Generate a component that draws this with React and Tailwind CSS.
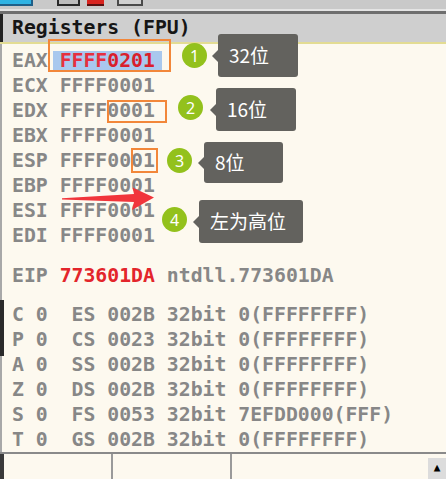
const regs = [
  ['EAX', 'FFFF0201'],
  ['ECX', 'FFFF0001'],
  ['EDX', 'FFFF0001'],
  ['EBX', 'FFFF0001'],
  ['ESP', 'FFFF0001'],
  ['EBP', 'FFFF0001'],
  ['ESI', 'FFFF0001'],
  ['EDI', 'FFFF0001'],
]

const flags = [
  ['C', 'ES', '002B', '0(FFFFFFFF)'],
  ['P', 'CS', '0023', '0(FFFFFFFF)'],
  ['A', 'SS', '002B', '0(FFFFFFFF)'],
  ['Z', 'DS', '002B', '0(FFFFFFFF)'],
  ['S', 'FS', '0053', '7EFDD000(FFF)'],
  ['T', 'GS', '002B', '0(FFFFFFFF)'],
]

const notes = [
  { n: '1', text: '32位', circle: 'left-[182px] top-[43px]', box: 'left-[218px] top-[34px] w-[80px] h-[43px]' },
  { n: '2', text: '16位', circle: 'left-[178px] top-[95px]', box: 'left-[216px] top-[88px] w-[80px] h-[43px]' },
  { n: '3', text: '8位', circle: 'left-[167px] top-[148px]', box: 'left-[204px] top-[142px] w-[79px] h-[41px]' },
  { n: '4', text: '左为高位', circle: 'left-[162px] top-[207px]', box: 'left-[199px] top-[200px] w-[104px] h-[43px]' },
]

function Row({ children, className = '' }) {
  return <div className={`h-[25px] flex items-center whitespace-pre ${className}`}>{children}</div>
}

export default function App() {
  return (
    <div className="relative w-[446px] h-[479px] overflow-hidden bg-[#fdf9ef] font-['DejaVu_Sans_Mono',monospace] text-[19.8px] font-bold text-[#878787]">
      {/* toolbar remnant */}
      <div className="h-[9px] bg-[#c9c9c9] relative">
        <div className="absolute left-0 top-0 w-[33px] h-[6px] bg-[#2fb3e3] border-b-2 border-r-2 border-[#1f5f88]" />
        <div className="absolute left-[57px] top-0 w-[23px] h-[6px] bg-[#bdbdbd] border-2 border-t-0 border-[#2a2a2a]" />
        <div className="absolute left-[87px] top-0 w-[17px] h-[6px] bg-[#d8241f] border-b-2 border-[#5a1010]" />
        <div className="absolute left-[117px] top-0 w-[26px] h-[6px] bg-[#d0d0d0] border-2 border-t-0 border-[#4a4a4a]" />
      </div>
      <div className="h-[2px] bg-[#e4e4e4]" />
      <div className="h-[3px] bg-[#6e6e6e]" />

      {/* header */}
      <div className="h-[28px] bg-[#cfcfcf] border-l-[3px] border-[#222] flex items-center pl-[9px] text-[#161616]">
        Registers (FPU)
      </div>
      <div className="h-[2px] bg-[#e3dc93]" />

      <div className="border-l-2 border-[#a8a8a8] pl-[10px] pt-[4px] h-[408px]">
        {regs.map(([name, val], i) => (
          <Row key={name}>
            {name + ' '}
            {i === 0 ? (
              <span className="inline-block -mx-[7px] px-[7px] h-[19px] leading-[19px] bg-[#a9c8ee] text-[#e6303f]">
                FFFF<span className="text-[#d91f2c]">0201</span>
              </span>
            ) : (
              val
            )}
          </Row>
        ))}
        <Row className="mt-[15px]">
          {'EIP '}
          <span className="text-[#e3252b]">773601DA</span>
          {' ntdll.773601DA'}
        </Row>
        <div className="mt-[14px]">
          {flags.map(([f, seg, sel, rest]) => (
            <Row key={f}>{`${f} 0  ${seg} ${sel} 32bit ${rest}`}</Row>
          ))}
        </div>
      </div>

      {/* bottom strip */}
      <div className="h-[2px] bg-[#8a8a8a]" />
      <div className="h-[25px] flex border-l-[4px] border-[#3a3a3a]">
        <div className="w-[109px] border-r-2 border-[#9a9a9a]" />
        <div className="w-[119px] border-r-2 border-[#9a9a9a]" />
        <div className="flex-1" />
        <div className="w-[18px] mt-[4px] bg-[#dcdcdc] flex items-center justify-center text-[11px] text-black">▲</div>
      </div>

      {/* dark left edge segment */}
      <div className="absolute left-0 top-[300px] w-[4px] h-[56px] bg-[#2a2a2a]" />

      {/* annotation frames */}
      <div className="absolute left-[48px] top-[39px] w-[123px] h-[33px] border-2 border-[#f2873a]" />
      <div className="absolute left-[107px] top-[100px] w-[60px] h-[23px] border-2 border-[#f2873a]" />
      <div className="absolute left-[131px] top-[148px] w-[27px] h-[25px] border-2 border-[#f2873a]" />

      {/* red arrow */}
      <svg className="absolute left-0 top-0" width="446" height="479">
        <path d="M62 198.2 L134 194 L132.5 187.5 L154 197.5 L132 210 L134 202 L62 199.6 Z" fill="#f1353b" />
      </svg>

      {/* numbered notes */}
      {notes.map((n) => (
        <div key={n.n}>
          <div className={`absolute ${n.circle} w-[25px] h-[25px] rounded-full bg-[#93c11c] flex items-center justify-center text-white font-normal font-['Noto_Sans',sans-serif] text-[16px]`}>
            {n.n}
          </div>
          <div className={`absolute ${n.box} rounded-[3px] bg-[#63625e] flex items-center pl-[11px] text-white font-normal font-['Noto_Sans_CJK_SC',sans-serif] text-[19px]`}>
            <div className="absolute -left-[6px] top-1/2 -translate-y-1/2 w-0 h-0 border-y-[6px] border-y-transparent border-r-[6px] border-r-[#63625e]" />
            {n.text}
          </div>
        </div>
      ))}
    </div>
  )
}
